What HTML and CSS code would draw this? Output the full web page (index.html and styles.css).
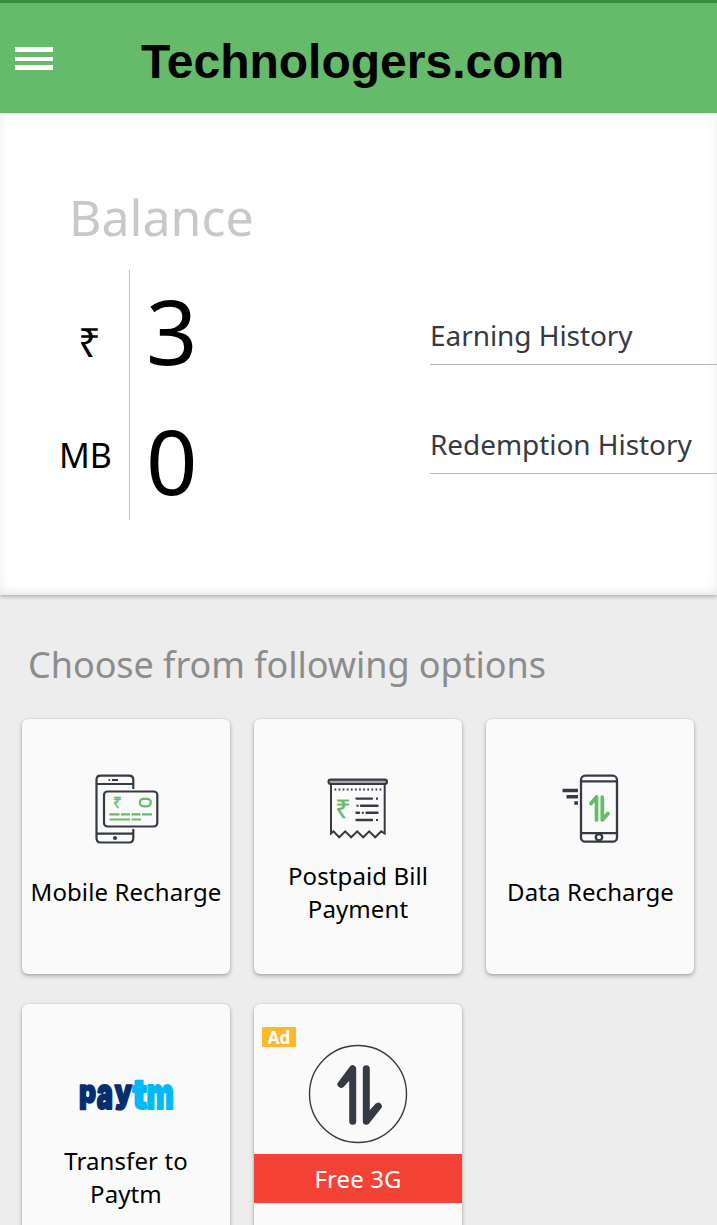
FILE: index.html
```html
<!DOCTYPE html>
<html lang="en">
<head>
<meta charset="utf-8">
<title>Technologers.com</title>
<link rel="stylesheet" href="styles.css">
</head>
<body>
<header class="topbar">
  <button class="menu" aria-label="Menu">
    <svg width="38" height="24" viewBox="0 0 38 24" fill="#fff"><path d="M0 0h38v5H0zM0 10h38v4H0zM0 18h38v5H0z"/></svg>
  </button>
  <h1 class="brand">Technologers.com</h1>
</header>
<section class="hero">
  <h2 class="hero-title">Balance</h2>
  <div class="hero-row">
    <div class="units"><span class="rupee">₹</span><span class="mb">MB</span></div>
    <div class="amounts"><span>3</span><span>0</span></div>
    <nav class="links"><a class="link">Earning History</a><a class="link">Redemption History</a></nav>
  </div>
</section>
<main class="options">
  <h2 class="options-title">Choose from following options</h2>
  <div class="grid">
    <article class="card">
      <svg class="icon" width="92" height="90" viewBox="0 0 92 90" fill="none" stroke="#363a42" stroke-width="2.200">
        <path d="M53.300 24V15q0-4.300-4.300-4.300H20.600q-4.100 0-4.100 4.300V73q0 4.500 4.100 4.500H49q4.300 0 4.300-4.500V64M17 19h36M17 68.700h36M32 15h6"/>
        <circle cx="29.300" cy="15" r="1" fill="#363a42" stroke="none"/><circle cx="35" cy="73" r="2" fill="#363a42" stroke="none"/>
        <rect x="24" y="26.500" width="53.300" height="35" rx="3.500"/>
        <text x="33" y="43" class="icon-rupee" font-size="15.500">₹</text>
        <rect x="59.800" y="33.800" width="11" height="7.500" rx="3.700" stroke="#66bb6a"/>
        <path d="M29.500 49.300h10M41 49.300h9M51.500 49.300h9M62 49.300h10M29.500 54.500h20.500M51.500 54.500h9.500" stroke="#66bb6a"/>
      </svg>
      <h3 class="label label-single">Mobile Recharge</h3>
    </article>
    <article class="card">
      <svg class="icon" width="86" height="90" viewBox="0 0 86 90" fill="none" stroke="#363a42" stroke-width="2.100">
        <rect x="13.500" y="14.500" width="58.500" height="4.500" rx="2.200" fill="#a4a6aa"/>
        <path d="M13.500 14.800h58.500" stroke-width="1.600"/>
        <path d="M16 18V68.500l2.500-2.200 5.700 6 6-6 6 6 6-6 6 6 6-6 6 6 6-6 3.500 2.200V18" stroke-width="2"/>
        <path d="M19.500 24.500h47" stroke-dasharray="1.700 2.400" stroke-width="1.800"/>
        <text transform="translate(20,53) scale(1.080,1)" class="icon-rupee" font-size="26">₹</text>
        <path d="M41.500 33.600H57M46 40.700h16.500M41.500 47.700h2.500M51.500 47.700H62.500M41.500 55H57" stroke-width="2.400" stroke-linecap="round"/>
        <path d="M61 33.600h2M41.500 40.700h2M46.800 47.700h2M61 55h2"/>
      </svg>
      <h3 class="label">Postpaid Bill<br>Payment</h3>
    </article>
    <article class="card">
      <svg class="icon" width="80" height="90" viewBox="0 0 80 90" fill="none" stroke="#363a42" stroke-width="2.300">
        <rect x="31" y="10.700" width="36" height="66" rx="4.300"/>
        <path d="M31 16.300h36M31 68.200h36"/><circle cx="49" cy="72.200" r="3.200" stroke-width="2.400"/>
        <path d="M12.500 25.500h15.500M16.500 31.800h11.500M24.300 38h3.700" stroke-width="3.400"/>
        <path d="M41 38.500 46.500 32v23M52.300 32v23l5.700-6.500" stroke="#66bb6a" stroke-width="3.700" stroke-linecap="round" stroke-linejoin="round"/>
      </svg>
      <h3 class="label label-single label-data">Data Recharge</h3>
    </article>
    <article class="card">
      <svg class="icon" width="96" height="90" viewBox="0 0 96 90">
        <g class="paytm" fill="#042e6f" stroke="#042e6f">
          <text transform="translate(1,52.500) scale(.8,1)">p</text>
          <text transform="translate(18.700,58.500) scale(.82,1.320)">a</text>
          <text transform="translate(36.500,52.500) scale(.84,1)">y</text>
        </g>
        <g class="paytm" fill="#00b9f5" stroke="#00b9f5">
          <text transform="translate(54.500,58.500) scale(1.100,1.250)">t</text>
          <text transform="translate(68.500,58.500) scale(.88,1.320)">m</text>
        </g>
      </svg>
      <h3 class="label">Transfer to<br>Paytm</h3>
    </article>
    <article class="card card-ad">
      <span class="badge">Ad</span>
      <svg class="ad-icon" width="100" height="100" viewBox="0 0 100 100" fill="none" stroke="#363a42">
        <circle cx="50" cy="50" r="48.500" stroke-width="1.400"/>
        <path d="M33 40.300 44.700 24.700V77.300M58.300 24.700V77.300L70.300 62.300" stroke-width="7" stroke-linecap="round" stroke-linejoin="round"/>
        <path d="M35.500 43 44.700 33V25L33 40M67.800 59.500 58.300 70v7L70 62" fill="#363a42" stroke="none"/>
      </svg>
      <h3 class="ribbon">Free 3G</h3>
    </article>
  </div>
</main>
</body>
</html>
```
FILE: styles.css
```css
* { box-sizing: border-box; }
html, body { height: 100%; }
body {
  margin: 0;
  overflow: hidden;
  background: #ededed;
  font-family: "Noto Sans", sans-serif;
  color: #000;
}
h1, h2, h3 { margin: 0; font-weight: 400; }
svg { display: block; }
.topbar {
  height: 113px;
  border-top: 3px solid #388e3c;
  background: #66bb6a;
  display: flex;
  align-items: center;
  padding: 0 15px;
}
.menu { padding: 2px 0 0; border: 0; background: none; width: 38px; }
.brand {
  margin-left: 88px;
  padding-top: 7px;
  font: bold 48px/56px "Liberation Sans", Arial, sans-serif;
  white-space: nowrap;
}
.hero {
  height: 482px;
  padding-top: 70px;
  background: #fff;
  box-shadow: inset 0 1px 0 #e4e4e4, inset 0 0 14px rgba(0,0,0,.06), inset 0 -6px 8px -4px rgba(0,0,0,.07), 0 2px 4px rgba(0,0,0,.24);
}
.hero-title { padding-left: 69px; font-size: 50px; line-height: 68px; color: #c8c8c8; }
.hero-row { display: flex; height: 250px; margin-top: 19px; }
.units {
  width: 130px;
  padding: 44px 0 0 42px;
  border-right: 1px solid #c2c2c2;
  display: flex;
  flex-direction: column;
  align-items: center;
  gap: 64px;
}
.rupee { padding: 1px 0 0 8px; font-size: 40px; line-height: 54px; margin-bottom: -1px; }
.mb { font-size: 34px; line-height: 46px; }
.amounts {
  width: 300px;
  padding-left: 16px;
  display: grid;
  grid-template-rows: 130px 130px;
  align-content: center;
  font-size: 90px;
  line-height: 130px;
}
.links { flex: 1; padding-top: 46px; display: flex; flex-direction: column; gap: 60px; }
.link {
  padding-bottom: 10px;
  border-bottom: 1px solid #bababa;
  font-size: 28px;
  letter-spacing: -.06px;
  line-height: 38px;
  color: #363a42;
  white-space: nowrap;
}
.options { padding: 45px 22px 0; }
.options-title { padding-left: 6px; font-size: 36px; letter-spacing: -.05px; line-height: 49px; color: #8c8c8c; white-space: nowrap; }
.grid {
  margin-top: 30px;
  display: grid;
  grid-template-columns: repeat(3, 208px);
  grid-auto-rows: 255px;
  gap: 30px 24px;
}
.card {
  position: relative;
  border-radius: 6px;
  background: #fafafa;
  box-shadow: 0 2px 4px rgba(0,0,0,.28), 0 0 2px rgba(0,0,0,.12);
  padding-top: 46px;
  display: flex;
  flex-direction: column;
  align-items: center;
}
.label {
  height: 66px;
  margin-top: 4px;
  display: flex;
  align-items: center;
  font-size: 24px;
  letter-spacing: .1px;
  line-height: 33px;
  text-align: center;
  white-space: nowrap;
}
.label-single { height: 64px; }
.label-data { padding-left: 1px; }
.icon-rupee { font-family: "Noto Sans", sans-serif; fill: #66bb6a; stroke: #66bb6a; stroke-width: .3; }
.paytm { font: 900 33px Inter, sans-serif; stroke-width: 1.6; stroke-linejoin: round; }
.card-ad { padding-top: 40px; }
.badge {
  position: absolute;
  left: 8px;
  top: 23px;
  width: 34px;
  height: 20px;
  border-radius: 1px;
  background: #fdb92a;
  color: #fff;
  font-size: 17px;
  font-weight: 700;
  line-height: 21px;
  text-align: center;
}
.ribbon {
  width: 100%;
  height: 49px;
  margin-top: 10px;
  background: #f44336;
  color: #fff;
  font-size: 24px;
  letter-spacing: .1px;
  line-height: 50px;
  text-align: center;
}
```
